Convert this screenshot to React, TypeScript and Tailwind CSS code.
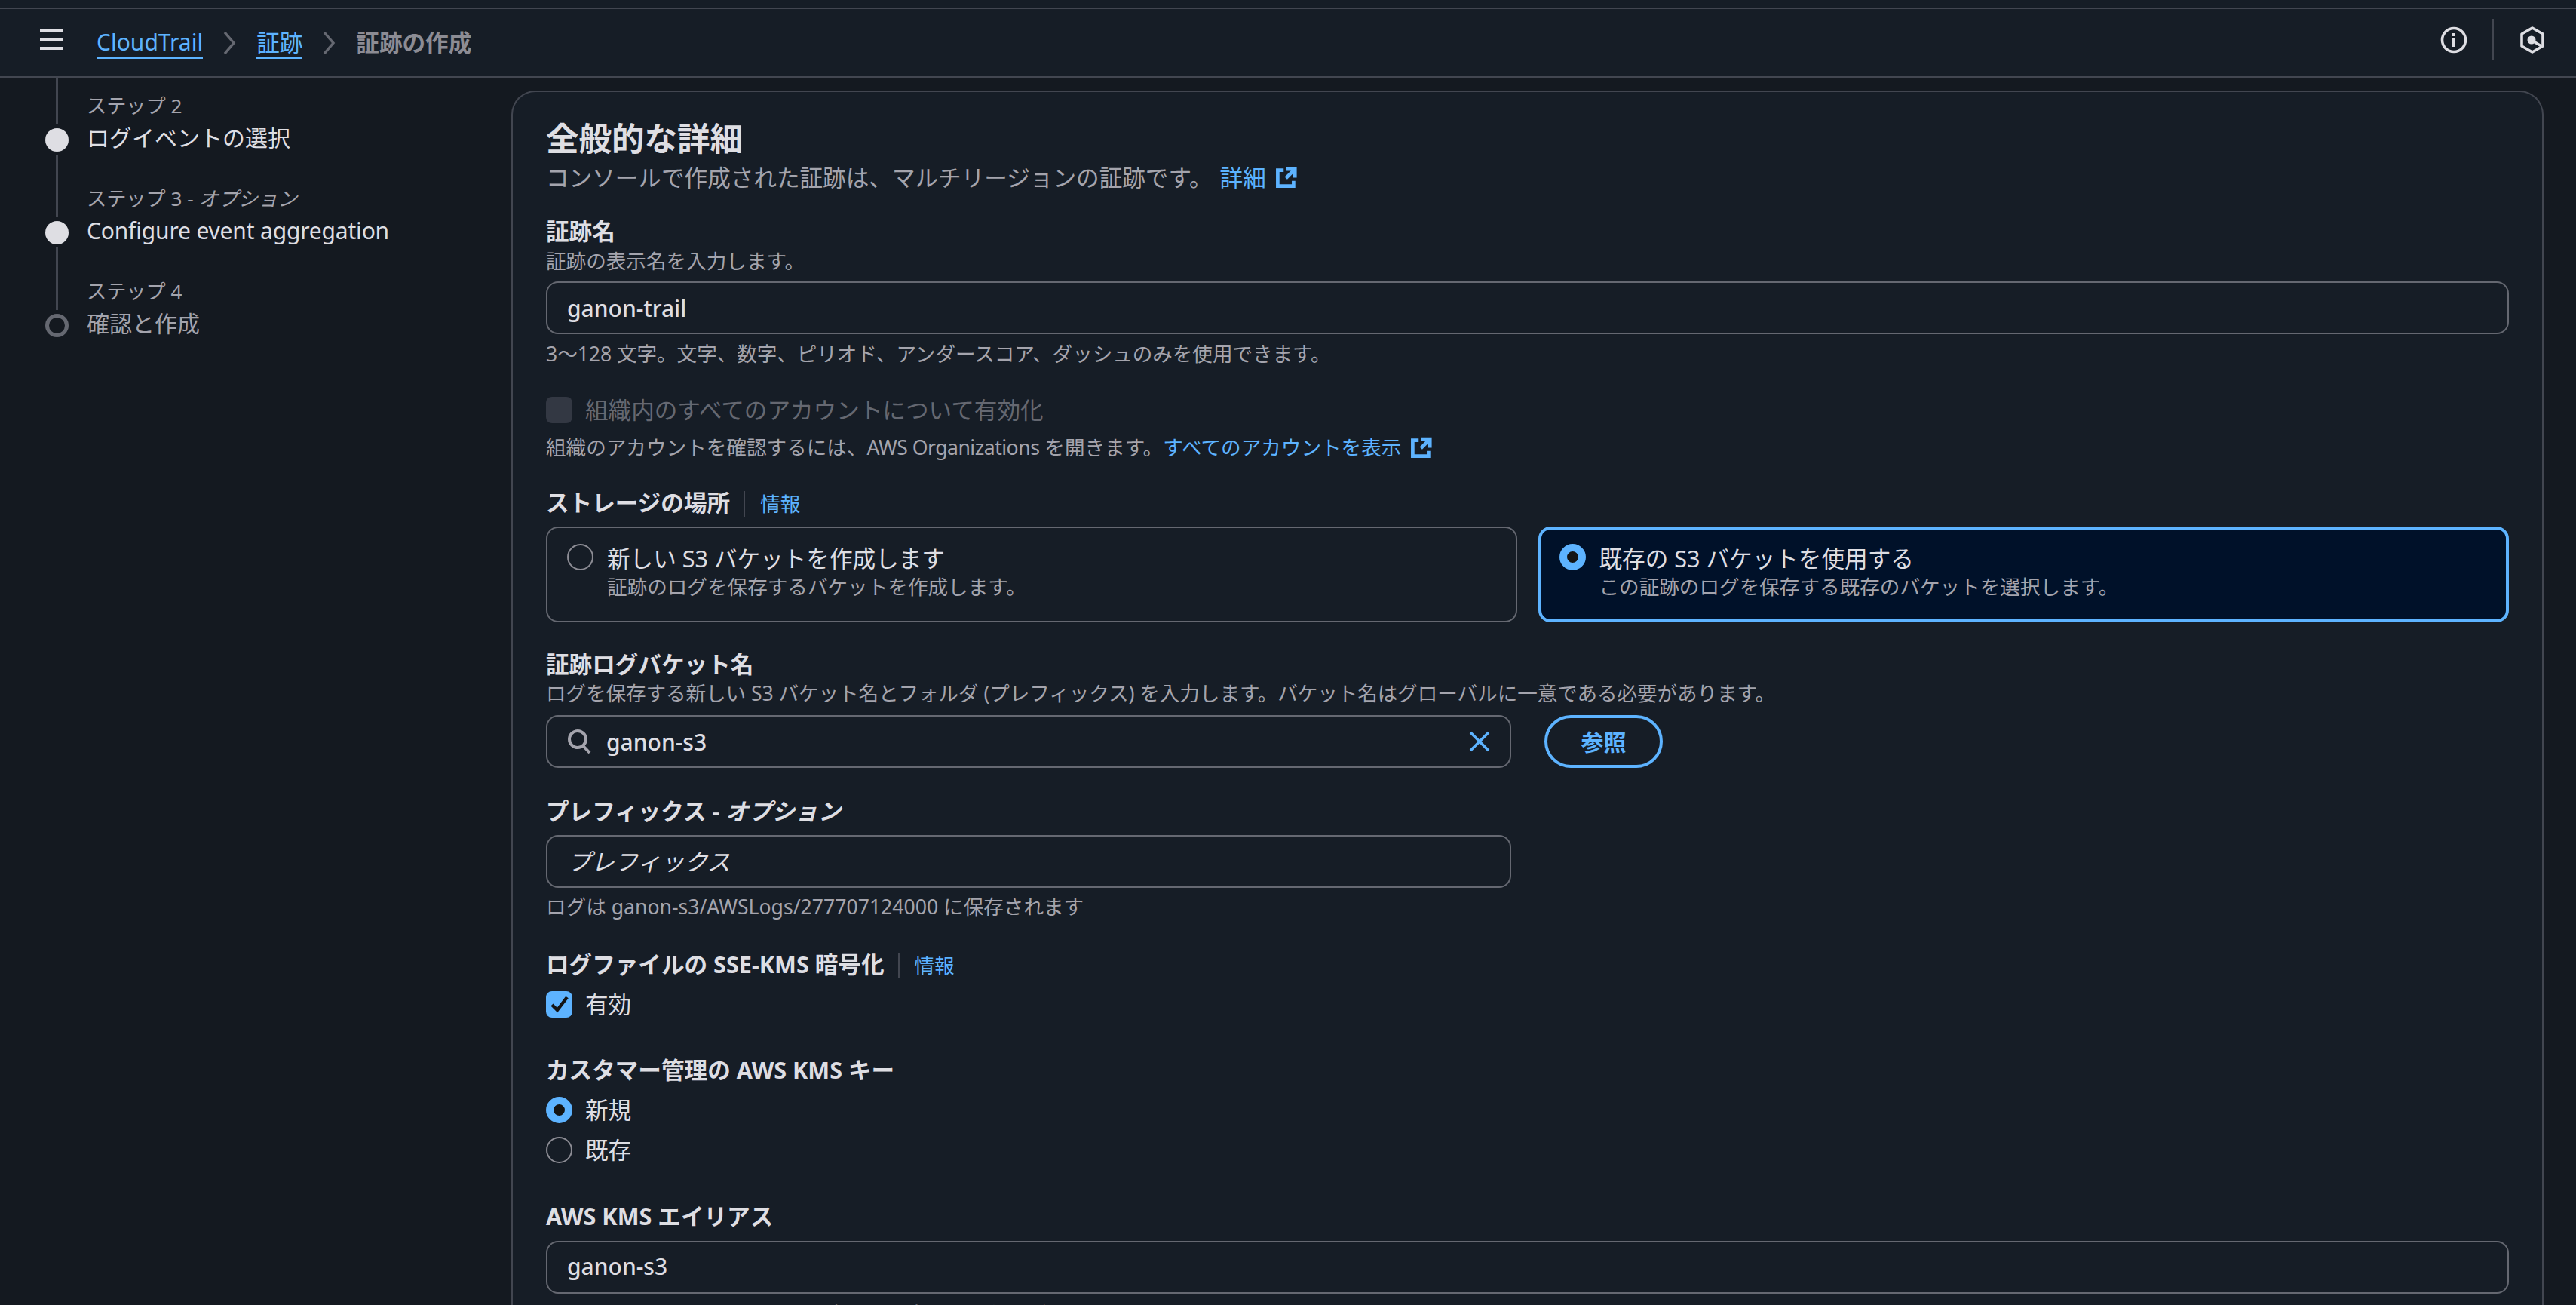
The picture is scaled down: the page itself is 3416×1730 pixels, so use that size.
import React from "react";

const Ext = ({ cls = "" }: { cls?: string }) => (
  <svg viewBox="0 0 16 16" className={"w-[30px] h-[30px] fill-none stroke-[#5db3ff] " + cls} strokeWidth="2.5">
    <path d="M14 7V2.2H9.2" strokeLinecap="square" />
    <path d="M14 2.2 7.6 8.6" />
    <path d="M6 3H1.8v11.2H13V10.5" />
  </svg>
);

const Label = ({ children, cls = "" }: { children: React.ReactNode; cls?: string }) => (
  <div className={"h-[36px] leading-[36px] text-[30.6px] font-bold text-[#dedee3] whitespace-nowrap " + cls}>{children}</div>
);

const Desc = ({ children, cls = "" }: { children: React.ReactNode; cls?: string }) => (
  <div className={"h-[36px] leading-[36px] text-[26.6px] text-[#a4a4ad] whitespace-nowrap " + cls}>{children}</div>
);

const Info = () => (
  <span className="mt-[3px] ml-[18px] pl-[20px] border-l-2 border-[#424650] h-[34px] leading-[34px] text-[26.6px] font-normal text-[#5db3ff]">情報</span>
);

const Radio = ({ on }: { on?: boolean }) =>
  on ? (
    <span className="block w-[35px] h-[35px] rounded-full border-[10px] border-[#5db3ff] bg-[#141414] shrink-0" />
  ) : (
    <span className="block w-[35px] h-[35px] rounded-full border-2 border-[#8c8c94] shrink-0" />
  );

const Field = ({ children, cls = "" }: { children: React.ReactNode; cls?: string }) => (
  <div className={"h-[70px] rounded-[16px] border-2 border-[#656871] flex items-center text-[30px] font-medium text-[#dedee3] " + cls}>
    {children}
  </div>
);

const Rail = () => (
  <div className="w-[80px] shrink-0 flex justify-center">
    <div className="w-[3px] h-full bg-[#424650]" />
  </div>
);

const Step = ({ small, title, state, titleCls = "" }: { small: React.ReactNode; title: string; state: "done" | "todo"; titleCls?: string }) => (
  <div className="flex flex-col">
    <div className="flex h-[62px]">
      <Rail />
      <div className="self-end mb-[10px] h-[30px] leading-[30px] text-[26.2px] text-[#a4a4ad] whitespace-nowrap">{small}</div>
    </div>
    <div className="flex h-[40px] items-center">
      <div className="w-[80px] shrink-0 flex justify-center">
        {state === "done" ? (
          <span className="block w-[31px] h-[31px] rounded-full bg-[#dedee3]" />
        ) : (
          <span className="block w-[31px] h-[31px] rounded-full border-[5px] border-[#656871]" />
        )}
      </div>
      <div className={"mt-[-5px] text-[30px] leading-[40px] whitespace-nowrap " + titleCls + " " + (state === "done" ? "text-[#dedee3]" : "text-[#a4a4ad]")}>{title}</div>
    </div>
  </div>
);

export default function App() {
  return (
    <div className="w-[3416px] h-[1730px] overflow-hidden bg-[#141920] flex flex-col [font-family:'Noto_Sans','Noto_Sans_CJK_JP',sans-serif]">
      <div className="h-[12px] shrink-0 bg-[#161d26] border-b-2 border-[#424650]" />
      <header className="h-[91px] shrink-0 bg-[#161d26] border-b-2 border-[#424650] flex items-center pl-[53px] pr-[42px]">
        <svg viewBox="0 0 31 27" className="w-[31px] h-[27px] mt-[-8px] shrink-0 fill-none stroke-[#dedee3]" strokeWidth="4">
          <path d="M0 2h31M0 13.5h31M0 25h31" />
        </svg>
        <nav className="flex items-center ml-[44px] text-[30px]">
          <span className="text-[#5db3ff] border-b-2 border-[#5db3ff] leading-[40px]">CloudTrail</span>
          <svg viewBox="0 0 17 30" className="w-[17px] h-[30px] mx-[27px] fill-none stroke-[#656871]" strokeWidth="3.4">
            <path d="M2 1l12 14L2 29" />
          </svg>
          <span className="text-[30.6px] text-[#5db3ff] border-b-2 border-[#5db3ff] leading-[40px]">証跡</span>
          <svg viewBox="0 0 17 30" className="w-[17px] h-[30px] mx-[27px] fill-none stroke-[#656871]" strokeWidth="3.4">
            <path d="M2 1l12 14L2 29" />
          </svg>
          <span className="text-[30.6px] text-[#8c8c94] font-bold leading-[40px] pb-[2px]">証跡の作成</span>
        </nav>
        <div className="ml-auto flex items-center mt-[-8px]">
          <svg viewBox="0 0 36 36" className="w-[36px] h-[36px] fill-none stroke-[#dedee3]" strokeWidth="3.6">
            <circle cx="18" cy="18" r="15.5" />
            <path d="M18 15v12M18 9v4" strokeWidth="4" />
          </svg>
          <div className="w-[2px] h-[55px] bg-[#424650] ml-[33px] mr-[35px]" />
          <svg viewBox="0 0 32 36" className="w-[32px] h-[36px] fill-none stroke-[#dedee3]" strokeWidth="3.6">
            <path d="M16 2 30 10v16L16 34 2 26V10z" strokeLinejoin="round" />
            <circle cx="15" cy="18" r="5.5" fill="#dedee3" stroke="none" />
            <path d="M16 19l12 7" />
          </svg>
        </div>
      </header>

      <div className="flex flex-1 min-h-0">
        <aside className="w-[678px] shrink-0 pl-[35px]">
          <Step small="ステップ 2" title="ログイベントの選択" state="done" />
          <div className="flex h-[21px]"><Rail /></div>
          <Step small={<>ステップ 3 - <i>オプション</i></>} title="Configure event aggregation" state="done" titleCls="tracking-[-0.18px]" />
          <div className="flex h-[21px]"><Rail /></div>
          <Step small="ステップ 4" title="確認と作成" state="todo" />
        </aside>

        <main className="w-[2695px] h-[1700px] mt-[17px] shrink-0 rounded-t-[32px] border-t-2 border-x-2 border-[#424650] bg-[#161d26] px-[44px] pt-[33px] text-[#dedee3]">
          <h1 className="h-[56px] leading-[56px] text-[43.5px] font-bold whitespace-nowrap">全般的な詳細</h1>
          <div className="mt-[4px] h-[40px] leading-[40px] text-[30.6px] text-[#a4a4ad] flex items-center whitespace-nowrap">
            コンソールで作成された証跡は、マルチリージョンの証跡です。
            <span className="ml-[10px] text-[#5db3ff]">詳細</span>
            <Ext cls="ml-[12px]" />
          </div>

          <Label cls="mt-[33px]">証跡名</Label>
          <Desc cls="mt-[4px]">証跡の表示名を入力します。</Desc>
          <Field cls="mt-[9px] pl-[26px]">ganon-trail</Field>
          <Desc cls="mt-[8px] tracking-[-0.06px]">3〜128 文字。文字、数字、ピリオド、アンダースコア、ダッシュのみを使用できます。</Desc>

          <div className="mt-[38px] h-[36px] flex items-center">
            <span className="block w-[35px] h-[35px] rounded-[8px] bg-[#333843] shrink-0" />
            <span className="ml-[17px] text-[30.6px] leading-[36px] text-[#656871]">組織内のすべてのアカウントについて有効化</span>
          </div>
          <Desc cls="mt-[14px] flex items-center">
            組織のアカウントを確認するには、<span className="tracking-[-0.5px]">AWS Organizations</span>&nbsp;を開きます。
            <span className="text-[#5db3ff]">すべてのアカウントを表示</span>
            <Ext cls="ml-[12px]" />
          </Desc>

          <Label cls="mt-[37px] flex items-center">
            ストレージの場所
            <Info />
          </Label>
          <div className="mt-[14px] grid grid-cols-2 gap-[28px] h-[127px]">
            <div className="rounded-[16px] border-2 border-[#656871] pl-[26px] pt-[21px] flex items-start">
              <Radio />
              <div className="ml-[18px]">
                <div className="h-[38px] leading-[38px] text-[30.6px] text-[#dedee3] whitespace-nowrap">新しい S3 バケットを作成します</div>
                <div className="mt-[1px] h-[36px] leading-[36px] text-[26.6px] text-[#a4a4ad] whitespace-nowrap">証跡のログを保存するバケットを作成します。</div>
              </div>
            </div>
            <div className="rounded-[16px] border-[4px] border-[#5db3ff] bg-[#001129] pl-[24px] pt-[19px] flex items-start">
              <Radio on />
              <div className="ml-[18px]">
                <div className="h-[38px] leading-[38px] text-[30.6px] text-[#dedee3] whitespace-nowrap">既存の S3 バケットを使用する</div>
                <div className="mt-[1px] h-[36px] leading-[36px] text-[26.6px] text-[#a4a4ad] whitespace-nowrap">この証跡のログを保存する既存のバケットを選択します。</div>
              </div>
            </div>
          </div>

          <Label cls="mt-[37px]">証跡ログバケット名</Label>
          <Desc cls="mt-[3px] tracking-[-0.08px]">ログを保存する新しい S3 バケット名とフォルダ (プレフィックス) を入力します。バケット名はグローバルに一意である必要があります。</Desc>
          <div className="mt-[11px] flex items-center">
            <Field cls="w-[1280px] pl-[26px] pr-[26px]">
              <svg viewBox="0 0 32 36" className="w-[32px] h-[36px] fill-none stroke-[#a4a4ad] shrink-0" strokeWidth="4">
                <circle cx="14" cy="15" r="11" />
                <path d="M21.5 24 30 33" />
              </svg>
              <span className="ml-[20px]">ganon-s3</span>
              <svg viewBox="0 0 28 28" className="ml-auto w-[28px] h-[28px] fill-none stroke-[#5db3ff]" strokeWidth="3.6">
                <path d="M2 2l24 24M26 2 2 26" />
              </svg>
            </Field>
            <button className="ml-[44px] w-[157px] h-[70px] rounded-full border-[4px] border-[#5db3ff] text-[#5db3ff] text-[30px] font-bold">参照</button>
          </div>

          <Label cls="mt-[39px]">プレフィックス - <i>オプション</i></Label>
          <Field cls="mt-[14px] w-[1280px] pl-[27px] text-[31px] font-normal italic text-[#8c8c94]">プレフィックス</Field>
          <Desc cls="mt-[7px]">ログは ganon-s3/AWSLogs/277707124000 に保存されます</Desc>

          <Label cls="mt-[40px] flex items-center">
            ログファイルの SSE-KMS 暗号化
            <Info />
          </Label>
          <div className="mt-[17px] h-[36px] flex items-center">
            <span className="flex items-center justify-center w-[35px] h-[35px] rounded-[8px] bg-[#5db3ff] shrink-0">
              <svg viewBox="0 0 26 26" className="w-[26px] h-[26px] fill-none stroke-[#141414]" strokeWidth="4.4">
                <path d="M3 14l7 7L23 4" />
              </svg>
            </span>
            <span className="ml-[17px] text-[30.6px] leading-[36px]">有効</span>
          </div>

          <Label cls="mt-[51px]">カスタマー管理の AWS KMS キー</Label>
          <div className="mt-[17px] h-[36px] flex items-center">
            <Radio on />
            <span className="ml-[17px] text-[30.6px] leading-[36px]">新規</span>
          </div>
          <div className="mt-[17px] h-[36px] flex items-center">
            <Radio />
            <span className="ml-[17px] text-[30.6px] leading-[36px]">既存</span>
          </div>

          <Label cls="mt-[52px]">AWS KMS エイリアス</Label>
          <Field cls="mt-[15px] pl-[26px] pb-[3px]">ganon-s3</Field>
          <Desc cls="mt-[9px]">エイリアスは、このリージョン内では一意である必要があります。</Desc>
        </main>
      </div>
    </div>
  );
}
